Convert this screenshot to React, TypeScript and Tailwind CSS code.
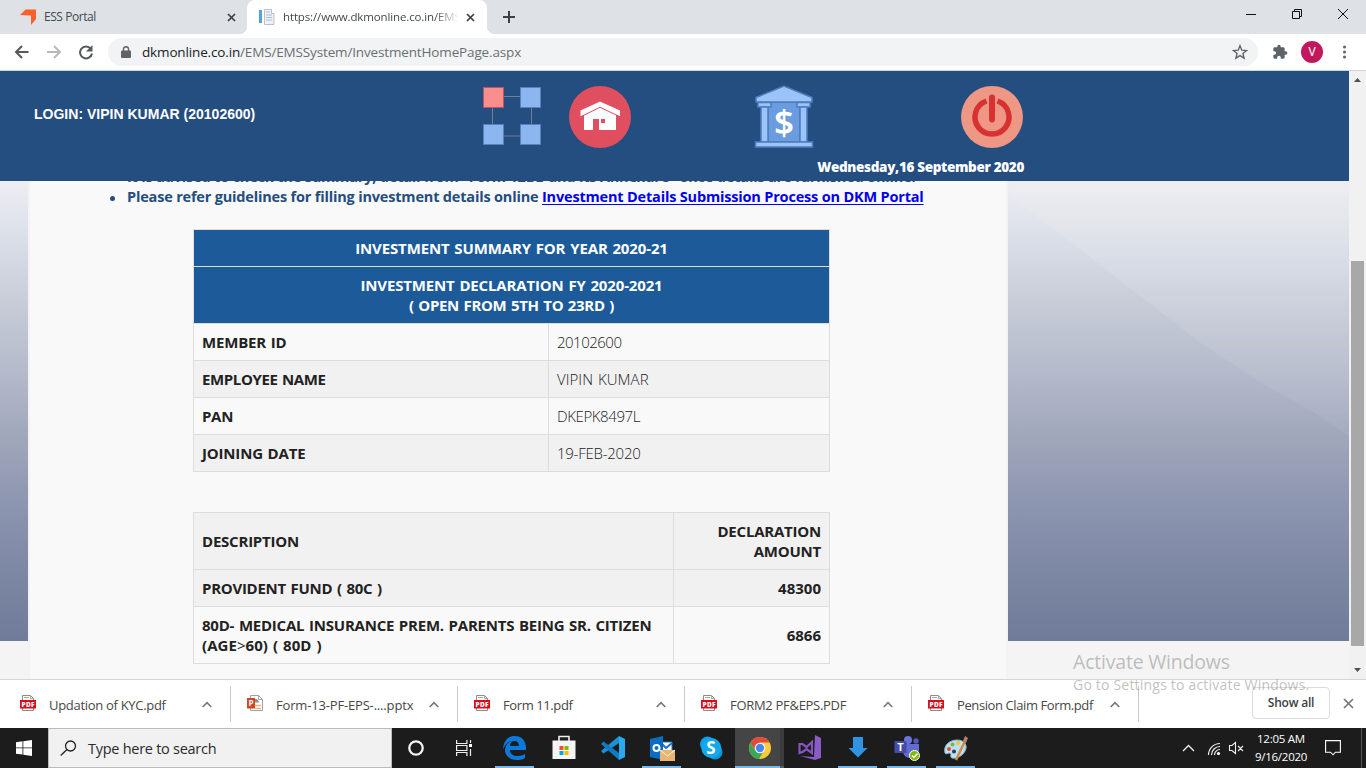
import React from 'react';

const segoe = "font-['Open_Sans','Noto_Sans',sans-serif]";

function TabStrip() {
  return (
    <div className="flex h-[34px] shrink-0 bg-[#dee1e6]">
      <div className="flex w-[247px] shrink-0 items-center pl-5">
        <svg className="h-4 w-4" viewBox="0 0 16 16">
          <path d="M0 6 5.500.500H16V10l-5 6V6.500z" fill="#f9602b" />
        </svg>
        <span className="ml-2 w-[184px] text-[12px] tracking-[-0.45px] text-[#45494d]">ESS Portal</span>
        <Cross className="-ml-px h-[9px] w-[9px]" />
      </div>
      <div className="relative flex w-[240px] shrink-0 items-center rounded-t-lg bg-white pl-3">
        <svg className="h-4 w-4 shrink-0" viewBox="0 0 16 16">
          <rect x="-2" y="1" width="5" height="13" fill="#56a0dc" />
          <path d="M5.500 .5h7v4h2.500v11h-9.500z" fill="#eef1f6" stroke="#b9c1cd" />
          <path d="M7 3h4M7 6h6M7 8.500h6M7 11h6" stroke="#aebdd0" />
        </svg>
        <span className="ml-2 w-[174px] shrink-0 overflow-hidden whitespace-nowrap text-[11.5px] tracking-[-0.13px] text-[#45494d] [mask-image:linear-gradient(to_right,black_152px,transparent_176px)]">
          https://www.dkmonline.co.in/EMS
        </span>
        <Cross className="ml-[9px] h-[9px] w-[9px]" />
        <div className="absolute -left-2 bottom-0 h-2 w-2 bg-[radial-gradient(circle_at_0_0,#dee1e6_8px,white_8.5px)]" />
        <div className="absolute -right-2 bottom-0 h-2 w-2 bg-[radial-gradient(circle_at_100%_0,#dee1e6_8px,white_8.5px)]" />
      </div>
      <div className="flex flex-1 items-center pl-4">
        <svg className="h-3 w-3" viewBox="0 0 12 12">
          <path d="M6 0v12M0 6h12" stroke="#3c4043" strokeWidth="2" />
        </svg>
      </div>
      <div className="flex w-[140px] pt-2">
        <svg className="h-[14px] w-[140px]" viewBox="0 0 140 14" fill="none" stroke="#111">
          <path d="M20 6.500h10M66.500 3.500h7v7h-7zM68.500 3v-1.500h7v7h-2M112 1l10 10M122 1l-10 10" />
        </svg>
      </div>
    </div>
  );
}

function Cross({ className }: { className: string }) {
  return (
    <svg className={`shrink-0 ${className}`} viewBox="0 0 9 9">
      <path d="M1 1l7 7M8 1l-7 7" stroke="#3c4043" strokeWidth="1.7" />
    </svg>
  );
}

function Toolbar() {
  return (
    <div className="flex h-[37px] shrink-0 items-center border-b border-[#cfd2d6] bg-white">
      <svg className="h-4 w-[108px] shrink-0" viewBox="0 0 108 16" fill="none" strokeWidth="2">
        <path d="M28.500 8H16M22 2l-6 6 6 6" stroke="#55595e" />
        <path d="M47 8h12.500M54 2l6 6-6 6" stroke="#b8babd" />
        <path d="M90.700 4.600A6 6 0 1 0 92 9.500" stroke="#55595e" />
        <path d="M92.500 1v6.500H86z" fill="#55595e" />
      </svg>
      <div className="flex h-7 w-[1150px] items-center rounded-full bg-[#f1f3f4] pl-[13px] pr-[10px]">
        <svg className="h-3 w-[10px]" viewBox="0 0 10 12">
          <rect y="4.500" width="10" height="7.500" rx="1" fill="#5f6368" />
          <path d="M2.500 5V3a2.500 2.300 0 0 1 5 0v2" fill="none" stroke="#5f6368" strokeWidth="1.400" />
        </svg>
        <span className="ml-[11px] flex-1 text-[13.5px] tracking-[-0.15px] text-[#6b6f74]">
          <span className="text-[#202124]">dkmonline.co.in</span>/EMS/EMSSystem/InvestmentHomePage.aspx
        </span>
        <svg className="h-4 w-4" viewBox="0 0 16 16">
          <path d="M8 1.700l1.800 4.500 4.700.3-3.600 3 1.200 4.700L8 11.600l-4.100 2.600 1.200-4.700-3.600-3 4.700-.3z" fill="none" stroke="#5f6368" strokeWidth="1.400" />
        </svg>
      </div>
      <svg className="ml-[14px] h-4 w-4" viewBox="0 0 24 24" fill="#5f6368">
        <path d="M20.500 11H19V7c0-1.100-.9-2-2-2h-4V3.500a2.500 2.500 0 0 0-5 0V5H4c-1.100 0-2 .9-2 2v3.800h1.500a2.700 2.700 0 0 1 0 5.400H2V20c0 1.100.9 2 2 2h3.800v-1.500a2.700 2.700 0 0 1 5.400 0V22H17c1.100 0 2-.9 2-2v-4h1.500a2.500 2.500 0 0 0 0-5z" />
      </svg>
      <div className="ml-[13px] flex h-[22px] w-[22px] items-center justify-center rounded-full bg-[#c2185b] font-[Roboto,sans-serif] text-[12px] text-white">V</div>
      <svg className="ml-[19px] h-[14px] w-1" viewBox="0 0 4 14" fill="#5f6368">
        <circle cx="2.500" cy="2" r="1.500" /><circle cx="2.500" cy="7" r="1.500" /><circle cx="2.500" cy="12" r="1.500" />
      </svg>
    </div>
  );
}

function NetworkIcon() {
  return (
    <svg className="h-[60px] w-[60px]" viewBox="0 0 60 60">
      <path d="M10.500 9.500h39v39.500h-39z" fill="none" stroke="#6e8199" />
      <g fill="#8bb6f0" stroke="#5683bf">
        <rect x="1.500" y=".5" width="20" height="20" fill="#f88f8d" stroke="#bb5363" />
        <rect x="38.500" y=".5" width="20" height="20" />
        <rect x="1.500" y="37.500" width="20" height="20" />
        <rect x="38.500" y="37.500" width="20" height="20" />
      </g>
    </svg>
  );
}

function HomeIcon() {
  return (
    <svg className="h-[62px] w-[62px]" viewBox="0 0 62 62">
      <circle cx="31" cy="31" r="31" fill="#df4f5f" />
      <path d="M15 28 31 20l16 8v16H30V33h-6v11h-9z" fill="#fff" />
      <rect x="32" y="33" width="4" height="4" fill="#df4f5f" />
      <path d="M11.500 24.500 31 15.500l20 9v6L31 21l-19.500 9.500z" fill="#fff" />
      <path d="M11.500 30.800 31 21.300l20 9.500" fill="none" stroke="#df4f5f" />
    </svg>
  );
}

function BankIcon() {
  return (
    <svg className="h-[63px] w-[60px]" viewBox="0 0 60 63">
      <g fill="#9bc2f9" stroke="#4c7dbd" strokeWidth="1.500">
        <rect x="14" y="17" width="32" height="40" fill="#6b9cdf" />
        <path d="M2 12.500 30 1l28 11.500V17H2z" />
        <rect x="4" y="17.500" width="13" height="4.500" />
        <rect x="43" y="17.500" width="13" height="4.500" />
        <rect x="7" y="22" width="7" height="35" />
        <rect x="46" y="22" width="7" height="35" />
        <rect x="1.500" y="57" width="57" height="5" />
      </g>
      <text x="30" y="50" textAnchor="middle" fill="#fff" className="font-['Noto_Sans',sans-serif] text-[35px] font-semibold">$</text>
    </svg>
  );
}

function PowerIcon() {
  return (
    <svg className="mr-px h-[62px] w-[62px]" viewBox="0 0 62 62">
      <circle cx="31" cy="31" r="31" fill="#ed9784" />
      <path d="M25.500 15A17 17 0 1 0 36.500 15" fill="none" stroke="#d73231" strokeWidth="5.500" />
      <path d="M31 11.500v22" stroke="#d73231" strokeWidth="6" strokeLinecap="round" />
    </svg>
  );
}

function SiteHeader() {
  return (
    <header className="z-10 flex h-[110px] shrink-0 bg-[#244d80]">
      <div className="w-[482px] pl-[34px] pt-[33px] font-['Liberation_Sans',Arial,sans-serif] text-[14px] font-bold leading-5 tracking-[0.01px] text-white">
        LOGIN: VIPIN KUMAR (20102600)
      </div>
      <div className="w-[87px] pt-4"><NetworkIcon /></div>
      <div className="w-[185px] pt-[15px]"><HomeIcon /></div>
      <div className="pt-[14px]"><BankIcon /></div>
      <div className="flex w-[210px] flex-col items-end pt-[15px]">
        <PowerIcon />
        <span className="mt-[9px] whitespace-nowrap text-[13.5px] font-extrabold leading-5 tracking-[-0.33px] text-white">Wednesday,16 September 2020</span>
      </div>
    </header>
  );
}

const base = 'bg-[linear-gradient(to_bottom,#eeeef3_0px,#dde1ea_49px,#c9cdd8_119px,#b2b8c9_199px,#a0a6ba_259px,#8e96b1_319px,#7d88a4_389px,#707b99_460px)]';

function Backdrop({ wide }: { wide?: boolean }) {
  return (
    <div className={`${wide ? 'flex-1' : 'w-7'} shrink-0 bg-[#f4f4f4]`}>
      <div className={`h-[460px] overflow-hidden ${base}`}>
        {wide && (
          <div className="h-full opacity-75 blur-[1px] bg-[linear-gradient(to_bottom,#eeeef3_0px,#e3e5ea_49px,#dde1ea_69px,#cdd1dc_129px,#bfc2d0_184px,#b2b8c9_219px,#a0a6ba_279px)] [clip-path:polygon(0_0,100%_0,100%_255px,310px_234px,250px_200px,190px_160px,110px_98px,50px_51px,0_15px)]" />
        )}
      </div>
    </div>
  );
}

const cell = 'border border-[#dddddd] px-2 py-2 align-middle';

function SummaryTable() {
  const rows = [
    ['MEMBER ID', 'tracking-[-0.18px]', '20102600', 'tracking-[-0.5px]'],
    ['EMPLOYEE NAME', 'tracking-[-0.38px]', 'VIPIN KUMAR', 'tracking-[0.05px]'],
    ['PAN', 'tracking-[-0.3px]', 'DKEPK8497L', 'tracking-[-0.4px]'],
    ['JOINING DATE', 'tracking-[-0.18px]', '19-FEB-2020', 'tracking-[-0.25px]'],
  ];
  return (
    <table className="w-[637px] table-fixed border-collapse text-[15px] leading-5 text-[#222] [word-spacing:1px]">
      <colgroup><col className="w-[355px]" /><col /></colgroup>
      <tbody>
        <tr className="h-[37px] bg-[#1c5a99] text-center font-bold tracking-[-0.13px] text-white"><td colSpan={2} className={cell}>INVESTMENT SUMMARY FOR YEAR 2020-21</td></tr>
        <tr className="h-[57px] bg-[#1c5a99] text-center font-bold tracking-[-0.15px] text-white">
          <td colSpan={2} className={cell}>INVESTMENT DECLARATION FY 2020-2021<br /><span className="tracking-[-0.33px]">( OPEN FROM 5TH TO 23RD )</span></td>
        </tr>
        {rows.map(([k, kt, v, vt], i) => (
          <tr key={k} className={`h-[37px] ${i % 2 ? 'bg-[#f1f1f1]' : 'bg-[#f9f9f9]'}`}>
            <td className={`${cell} font-bold ${kt}`}>{k}</td>
            <td className={`${cell} font-[340] ${vt}`}>{v}</td>
          </tr>
        ))}
      </tbody>
    </table>
  );
}

function DeclarationTable() {
  return (
    <table className="mt-10 w-[637px] table-fixed border-collapse text-[15px] font-bold leading-5 tracking-[-0.22px] text-[#222] [word-spacing:1px]">
      <colgroup><col className="w-[480px]" /><col /></colgroup>
      <tbody>
        <tr className="h-[57px] bg-[#f1f1f1]"><td className={cell}>DESCRIPTION</td><td className={`${cell} text-right`}>DECLARATION<br />AMOUNT</td></tr>
        <tr className="h-[37px] bg-[#f1f1f1]"><td className={`${cell} tracking-[-0.27px]`}>PROVIDENT FUND ( 80C )</td><td className={`${cell} text-right tracking-[0]`}>48300</td></tr>
        <tr className="h-[57px] bg-[#f9f9f9]"><td className={cell}>80D- MEDICAL INSURANCE PREM. PARENTS BEING SR. CITIZEN<br /><span className="tracking-[0.06px]">(AGE<span className="font-normal">&gt;</span>60) ( 80D )</span></td><td className={`${cell} text-right tracking-[0]`}>6866</td></tr>
      </tbody>
    </table>
  );
}

function PageContent() {
  return (
    <div className="flex min-h-0 flex-1 overflow-hidden">
      <Backdrop />
      <main className="flex w-[980px] shrink-0 flex-col border-l-2 border-r-2 border-[#f3f3f3] bg-[#f9f9f9] pl-[97px]">
        <ul className="-mt-[14px] list-none text-[14.5px] font-bold leading-5 tracking-[-0.18px] text-[#244d80]">
          <li className="whitespace-nowrap">It is advised to check the summary, detail from "Form 12BB and its Annexure" once details are furnished online.</li>
          <li className="relative whitespace-nowrap before:absolute before:-left-[17px] before:top-[9px] before:h-[5px] before:w-[5px] before:rounded-full before:bg-[#244d80]">
            Please refer guidelines for filling investment details online <a className="text-[#0000ee] underline decoration-1 underline-offset-2">Investment Details Submission Process on DKM Portal</a>
          </li>
        </ul>
        <div className="pl-[66px] pt-[22px]">
          <SummaryTable />
          <DeclarationTable />
        </div>
      </main>
      <Backdrop wide />
    </div>
  );
}

function Scrollbar() {
  return (
    <div className="flex w-[17px] shrink-0 flex-col items-center bg-[#f1f1f1]">
      <svg className="h-[17px] w-[17px]" viewBox="0 0 17 17"><path d="M5 11 8.500 7 12 11z" fill="#505050" /></svg>
      <div className="mt-[173px] h-[385px] w-[13px] bg-[#a8a8a8]" />
      <svg className="mt-auto h-[17px] w-[17px]" viewBox="0 0 17 17"><path d="M5 6 8.500 10 12 6z" fill="#505050" /></svg>
    </div>
  );
}

function PdfIcon() {
  return (
    <svg className="h-4 w-4 shrink-0" viewBox="0 0 16 16">
      <path d="M2.500.5h8l3 3v12h-11z" fill="#fff" stroke="#8c8c8c" />
      <path d="M10.500.5v3h3M4 2.500h5" fill="none" stroke="#a5a5a5" />
      <rect y="5" width="16" height="8.500" fill="#dd0b18" />
      <text x="8" y="11.700" textAnchor="middle" textLength="13" fill="#fff" className="font-['Open_Sans',sans-serif] text-[6.5px] font-extrabold">PDF</text>
    </svg>
  );
}

function PptIcon() {
  return (
    <svg className="h-4 w-4 shrink-0" viewBox="0 0 16 16">
      <path d="M3.500.5h8l4 4v11h-12z" fill="#fff" stroke="#a3a3a3" />
      <path d="M11.500.5v4h4" fill="none" stroke="#a3a3a3" />
      <path d="M8 10.500h6M8 13.500h6" stroke="#f0ac8d" strokeWidth="1.400" />
      <path d="M8 4a3.500 3.500 0 0 1 4 3.500h-4z" fill="#8d8d8d" />
      <rect y="3" width="8" height="10.500" fill="#d24625" />
      <text x="4" y="11" textAnchor="middle" fill="#fff" className="font-['Open_Sans',sans-serif] text-[8px] font-bold">P</text>
    </svg>
  );
}

function DownloadBar() {
  const items = [
    { name: 'Updation of KYC.pdf', t: 'tracking-[-0.3px]' },
    { name: 'Form-13-PF-EPS-....pptx', t: 'tracking-[-0.17px]', ppt: true },
    { name: 'Form 11.pdf', t: 'tracking-[-0.4px]' },
    { name: 'FORM2 PF&EPS.PDF', t: 'tracking-[-0.3px]' },
    { name: 'Pension Claim Form.pdf', t: 'tracking-[-0.4px]' },
  ];
  return (
    <div className="relative flex h-[49px] shrink-0 items-center border-t border-[#d5d5d5] bg-white pl-1">
      {items.map((d) => (
        <div key={d.name} className="flex h-9 w-[227px] shrink-0 items-center border-r border-[#c8cacd] pl-4">
          <div className="mb-[2px]">{d.ppt ? <PptIcon /> : <PdfIcon />}</div>
          <span className={`ml-[13px] w-[153px] whitespace-nowrap pt-px text-[13px] leading-5 text-[#474747] ${d.t}`}>{d.name}</span>
          <svg className="h-[7px] w-[10px]" viewBox="0 0 10 7"><path d="M.7 6 5 1.700 9.300 6" fill="none" stroke="#76797c" strokeWidth="1.700" /></svg>
        </div>
      ))}
      <div className="-mt-[2px] ml-[113px] flex h-8 w-[78px] items-center justify-center whitespace-nowrap rounded border border-[#dadce0] text-[12px] font-semibold tracking-[-0.2px] text-[#3c4043]">Show all</div>
      <svg className="-mt-[2px] ml-[13px] h-[11px] w-[11px]" viewBox="0 0 11 11"><path d="M1 1l9 9M10 1l-9 9" stroke="#74777a" strokeWidth="1.700" /></svg>
      <div className="pointer-events-none absolute left-[1073px] top-[-31px] whitespace-nowrap text-[#8c8c8c]/55">
        <div className="text-[19.5px] leading-[26px] tracking-[-0.2px]">Activate Windows</div>
        <div className="text-[14px] leading-5 tracking-[0.2px]">Go to Settings to activate Windows.</div>
      </div>
    </div>
  );
}

const icons: React.ReactNode[] = [
  <g key="edge"><path d="M1 14C2 4 7 1 13 1c7 0 11 5 11 12v2H8c0 4 3 6 8 6 3 0 5-1 7-2v4c-3 2-6 2-8 2C8 25 3 21 3 15c0-4 3-8 7-9C7 6 3 9 1 14z M8 11h9c0-3-2-5-4-5-3 0-5 2-5 5z" fill="#0a7bdc" fillRule="evenodd" /></g>,
  <g key="store"><path d="M8 7V1.500h10V7" fill="none" stroke="#eee" strokeWidth="1.600" /><path d="M1.500 5.500h23v18.500h-23z" fill="#f4f4f4" /><path d="M8.500 11h4v4h-4z" fill="#f25022" /><path d="M13.500 11h4v4h-4z" fill="#7fba00" /><path d="M8.500 16h4v4h-4z" fill="#00a4ef" /><path d="M13.500 16h4v4h-4z" fill="#ffb900" /></g>,
  <g key="code"><path d="M19 1 25 4v18l-6 3z" fill="#2ba9ef" /><path d="M19 1 1 16l2.500 2.500L19 8z" fill="#1b91d8" /><path d="M19 25 1 9l2.500-2.500L19 18z" fill="#0f7bc4" /></g>,
  <g key="outlook"><path d="M12 7h11v11H12z" fill="#fff" stroke="#1470c4" /><path d="m13 9 4 4 6-5" fill="none" stroke="#1470c4" strokeWidth="2" /><path d="m1 4 13-3v24L1 22z" fill="#0a6cc4" /><circle cx="7.500" cy="13" r="3" fill="none" stroke="#fff" strokeWidth="2" /><path d="M11 15h15v11H11z" fill="#e9b574" /><path d="m11 15 7.500 6 7.500-6" fill="none" stroke="#fff3df" /></g>,
  <g key="skype"><circle cx="9.500" cy="9" r="7.500" fill="#109fe8" /><circle cx="17" cy="17" r="7.500" fill="#0795dc" /><circle cx="13.300" cy="13" r="10" fill="#13a7ec" /><text x="13" y="19" textAnchor="middle" fill="#fff" className="font-['Open_Sans',sans-serif] text-[17px] font-bold">S</text></g>,
  <g key="chrome"><circle cx="13" cy="13" r="11" fill="#fbcb3c" /><path d="M3.500 7.500A11 11 0 0 1 22.500 7.500H13L8 15z" fill="#e24a3b" /><path d="M3.500 7.500A11 11 0 0 0 12 24l5-8.500L8 15z" fill="#3aa757" /><circle cx="13" cy="13" r="5.300" fill="#fff" /><circle cx="13" cy="13" r="4.200" fill="#4a86ee" /></g>,
  <g key="vs"><path d="m19 0 6 3v20l-6 2L4 21l14 1z" fill="#8a5cc6" /><path d="M3.500 9v9l3-1 4-3 5.500 4V7l-5.500 5-4-3z" fill="none" stroke="#8356bd" strokeWidth="2.200" /></g>,
  <g key="down"><path d="M8 2h10v11h4.500L13 22.500 3.500 13H8z" fill="#2f94e3" /></g>,
  <g key="teams"><circle cx="14" cy="5" r="4" fill="#6a73d8" /><circle cx="22" cy="6" r="2.700" fill="#5059c9" /><path d="M9 9h16v8c0 5-5 7-9 6-4 0-7-3-7-7z" fill="#646ccf" /><path d="M.5 6h12v12H.5z" fill="#444ca9" /><text x="6.500" y="16" textAnchor="middle" fill="#fff" className="font-['Open_Sans',sans-serif] text-[11px] font-bold">T</text><circle cx="20.500" cy="20.500" r="5" fill="#7fba00" stroke="#fff" /><path d="m18 20.500 2 2 3.500-4" fill="none" stroke="#fff" strokeWidth="1.500" /></g>,
  <g key="paint"><path d="M2 18C0 10 7 5 14 5c8 0 11 6 8 11-3 6-10 8-13 7-3-1 1-5-3-5-1 0-3 2-4 0z" fill="#bfe0ee" stroke="#84b9cf" /><circle cx="6" cy="14" r="2" fill="#e34d38" /><circle cx="9.500" cy="9.500" r="2" fill="#75b843" /><circle cx="15" cy="8" r="2" fill="#edc436" /><circle cx="11" cy="16.500" r="2" fill="#253a68" /><path d="M13 25 22 6" stroke="#d28c43" strokeWidth="2.500" /><path d="m20 6 2-5 3 2-2 5z" fill="#b38263" /></g>,
];

function Taskbar() {
  const running = [true, false, false, true, false, true, false, true, true, true];
  return (
    <div className="flex h-10 shrink-0 bg-[#1c1c1c] text-white">
      <div className="flex w-12 items-center justify-center">
        <svg className="h-4 w-4" viewBox="0 0 16 16" fill="#fff"><path d="M0 2.200 6.500 1.300v6.200H0zM7.300 1.200 16 0v7.500H7.300zM0 8.300h6.500v6.300L0 13.700zM7.300 8.300H16V16l-8.700-1.200z" /></svg>
      </div>
      <div className="flex w-[344px] items-center border border-[#bdbdbd] bg-[#f1f1f1] pl-[11px]">
        <svg className="h-4 w-[17px]" viewBox="0 0 17 16" fill="none" stroke="#222" strokeWidth="1.300"><circle cx="10.500" cy="6" r="5" /><path d="M7 9.500.7 15.500" /></svg>
        <span className="ml-[11px] pt-px text-[14.5px] tracking-[-0.27px] text-[#2b2b2b]">Type here to search</span>
      </div>
      <div className="flex w-12 items-center justify-center">
        <svg className="h-4 w-4" viewBox="0 0 16 16"><circle cx="8" cy="8" r="6.700" fill="none" stroke="#f2f2f2" strokeWidth="2.300" /></svg>
      </div>
      <div className="flex w-[50px] items-center justify-center">
        <svg className="mr-[2px] h-4 w-4" viewBox="0 0 16 16" fill="none" stroke="#eee" strokeWidth="1.200"><path d="M.6 0v3.500h10.300V0M.6 16v-3.500h10.300V16M.6 5.500h10.300v5H.6zM14.500 0v3M14.500 9v7" /><path d="M13 4h3v3h-3z" fill="#fff" stroke="none" /></svg>
      </div>
      {icons.map((icon, i) => (
        <div key={i} className={`relative flex w-[49px] shrink-0 items-center justify-center ${i === 5 ? 'bg-[#454545]' : ''}`}>
          <svg className="h-[26px] w-[26px]" viewBox="0 0 26 26">{icon}</svg>
          {running[i] && <div className={`absolute bottom-0 h-[2px] bg-[#76b9ed] ${i === 5 ? 'inset-x-0' : 'inset-x-[5px]'}`} />}
          {i === 5 && <div className="absolute right-0 top-0 h-10 w-1 bg-[#393939]/70" />}
        </div>
      ))}
      <div className="flex flex-1 items-center justify-end">
        <svg className="-mr-[2px] h-5 w-[66px]" viewBox="0 0 66 20" fill="none" stroke="#eee">
          <path d="m2 13 5.500-5.500L13 13" strokeWidth="1.400" />
          <path d="M27.500 17A11.500 11.500 0 0 1 39 5.500M30.500 17A8.500 8.500 0 0 1 39 8.500M33.500 17A5.500 5.500 0 0 1 39 11.500" strokeWidth="1.200" />
          <circle cx="37.500" cy="15.500" r="1.600" fill="#fff" stroke="none" />
          <path d="M48.500 7.500h2.500l3.500-3v11l-3.500-3h-2.500zM57 8l5 5M62 8l-5 5" strokeWidth="1.100" />
        </svg>
      </div>
      <div className="w-[72px] whitespace-nowrap pt-[2px] text-center text-[11.5px] leading-[18px] tracking-[-0.25px]">
        <div>12:05 AM</div>
        <div>9/16/2020</div>
      </div>
      <div className="flex w-[44px] items-center pl-2">
        <svg className="h-4 w-4" viewBox="0 0 16 16"><path d="M.6.6h14.800v11.600h-5L8 14.800l-2.500-2.600H.6z" fill="none" stroke="#fff" strokeWidth="1.100" /></svg>
      </div>
      <div className="w-[5px] border-l border-[#565656]" />
    </div>
  );
}

export default function App() {
  return (
    <div className={`flex h-[768px] w-[1366px] flex-col overflow-hidden bg-white ${segoe}`}>
      <TabStrip />
      <Toolbar />
      <div className="flex min-h-0 flex-1">
        <div className="flex min-w-0 flex-1 flex-col">
          <SiteHeader />
          <PageContent />
        </div>
        <Scrollbar />
      </div>
      <DownloadBar />
      <Taskbar />
    </div>
  );
}
